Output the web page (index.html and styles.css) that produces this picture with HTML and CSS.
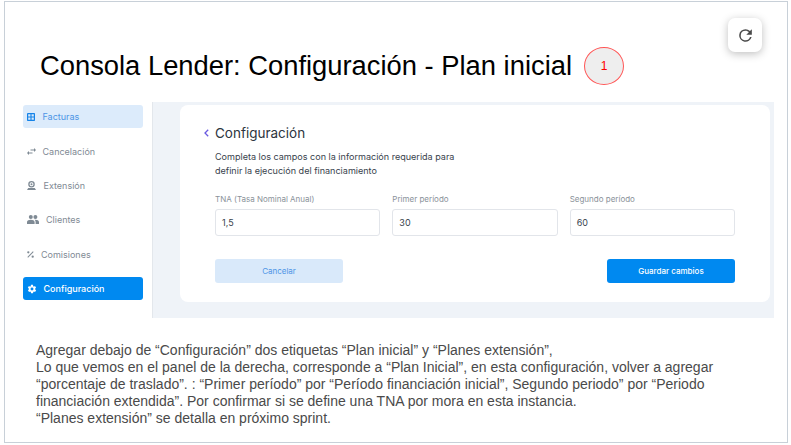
FILE: index.html
```html
<!DOCTYPE html>
<html lang="es">
<head>
    <meta charset="UTF-8">
    <meta name="viewport" content="width=device-width, initial-scale=1.0">
    <title>Consola Lender: Configuración - Plan inicial</title>
    <link rel="stylesheet" href="styles.css">
</head>
<body>
    <div class="slide">
        <button class="refresh" type="button" aria-label="Recargar">
            <svg width="19" height="19" viewBox="0 0 24 24"><path d="M17.65 6.35A7.96 7.96 0 0 0 12 4a8 8 0 1 0 7.73 10h-2.08A6 6 0 1 1 12 6c1.66 0 3.14.69 4.22 1.78L13 11h7V4l-2.35 2.35z"/></svg>
        </button>

        <header class="head">
            <h1>Consola Lender: Configuración - Plan inicial</h1>
            <span class="badge">1</span>
        </header>

        <div class="app">
            <nav class="side">
                <a class="item item-light">
                    <svg width="8" height="8" viewBox="0 0 10 10"><path d="M1.2 0h7.6C9.5 0 10 .5 10 1.2v7.6c0 .7-.5 1.2-1.2 1.2H1.2C.5 10 0 9.5 0 8.8V1.2C0 .5.5 0 1.2 0zm.3 1.5v2.8h2.8V1.500H1.500zm4.200 0v2.800h2.800V1.500H5.700zM1.500 5.700v2.800h2.800V5.700H1.500zm4.200 0v2.800h2.800V5.700H5.700z" fill-rule="evenodd"/></svg>
                    Facturas
                </a>
                <a class="item item-swap">
                    <svg width="9" height="9" viewBox="3 3 18 18"><path d="M6.99 11 3 15l3.99 4v-3H14v-2H6.99v-3zM21 9l-3.99-4v3H10v2h7.01v3L21 9z"/></svg>
                    Cancelación
                </a>
                <a class="item">
                    <svg width="9" height="9" viewBox="0 0 11 11"><path d="M5.500 0a4 4 0 1 1 0 8 4 4 0 0 1 0-8zm0 1.600a2.400 2.400 0 1 0 0 4.800 2.400 2.400 0 0 0 0-4.800z" fill-rule="evenodd"/><circle cx="5.500" cy="4" r="1.200"/><path d="M1.500 8.500h8L11 11H0z"/></svg>
                    Extensión
                </a>
                <a class="item item-clients">
                    <svg width="12" height="9" viewBox="0 0 12 9"><circle cx="3.800" cy="2" r="2"/><circle cx="8.400" cy="2" r="2"/><path d="M0 9V7c0-1.500 2-2.300 3.800-2.300S7.600 5.500 7.600 7v2H0zm8.600 0V7c0-.9-.4-1.700-1-2.200.3-.1.600-.1.900-.1 1.700 0 3.500.8 3.500 2.300v2H8.600z"/></svg>
                    Clientes
                </a>
                <a class="item item-narrow">
                    <svg width="7" height="7" viewBox="0 0 8 8"><path d="M6.800.4 7.600 1.200 1.200 7.600.4 6.800z"/><circle cx="1.500" cy="1.500" r="1.300"/><circle cx="6.500" cy="6.500" r="1.300"/></svg>
                    Comisiones
                </a>
                <a class="item item-active">
                    <svg width="10" height="10" viewBox="0 0 24 24"><path d="M19.400 13c.1-.3.100-.7.100-1s0-.7-.1-1l2.100-1.600c.2-.2.200-.4.100-.6l-2-3.500c-.1-.2-.4-.3-.6-.2l-2.500 1c-.5-.4-1.100-.7-1.700-1l-.4-2.600c0-.3-.2-.5-.5-.5h-4c-.3 0-.5.200-.5.400l-.4 2.700c-.6.200-1.100.6-1.700 1l-2.500-1c-.2-.1-.5 0-.6.200l-2 3.500c-.1.200-.1.400.1.600L4.600 11c0 .3-.1.700-.1 1s0 .7.100 1l-2.100 1.600c-.2.200-.2.400-.1.600l2 3.500c.1.200.4.300.6.200l2.500-1c.5.400 1.100.7 1.700 1l.4 2.600c0 .3.200.5.500.5h4c.3 0 .5-.2.500-.4l.4-2.700c.6-.2 1.200-.6 1.700-1l2.500 1c.2.100.5 0 .6-.2l2-3.500c.1-.2.100-.4-.1-.6L19.400 13zM12 15.500a3.500 3.500 0 1 1 0-7 3.500 3.500 0 0 1 0 7z"/></svg>
                    Configuración
                </a>
            </nav>

            <main class="panel">
                <section class="card">
                    <h2 class="card-title">
                        <svg width="5" height="8" viewBox="0 0 5 8"><path d="M4.200 .8 1 4l3.200 3.200" fill="none" stroke="#6a5ae0" stroke-width="1.300"/></svg>
                        Configuración
                    </h2>
                    <p class="intro">Completa los campos con la información requerida para<br>definir la ejecución del financiamiento</p>
                    <div class="fields">
                        <div class="field">
                            <label>TNA (Tasa Nominal Anual)</label>
                            <div class="box">1,5</div>
                        </div>
                        <div class="field">
                            <label>Primer período</label>
                            <div class="box">30</div>
                        </div>
                        <div class="field">
                            <label>Segundo período</label>
                            <div class="box">60</div>
                        </div>
                    </div>
                    <div class="actions">
                        <button class="btn btn-light" type="button">Cancelar</button>
                        <button class="btn btn-primary" type="button">Guardar cambios</button>
                    </div>
                </section>
            </main>
        </div>

        <p class="notes">Agregar debajo de “Configuración” dos etiquetas “Plan inicial” y “Planes extensión”,<br>Lo que vemos en el panel de la derecha, corresponde a “Plan Inicial”, en esta configuración, volver a agregar<br>“porcentaje de traslado”. : “Primer período” por “Período financiación inicial”, Segundo periodo” por “Periodo<br>financiación extendida”. Por confirmar si se define una TNA por mora en esta instancia.<br>“Planes extensión” se detalla en próximo sprint.</p>
    </div>
</body>
</html>
```

FILE: styles.css
```css
html, body { margin: 0; height: 100%; background: #fff; overflow: hidden; }
body { padding: 1px 3px 2px 4px; box-sizing: border-box; }

.slide {
    position: relative;
    height: 442px;
    box-sizing: border-box;
    border: 1px solid #c8d0d8;
    background: #fff;
    font-family: "Liberation Sans", Arial, sans-serif;
}

.refresh {
    position: absolute;
    top: 16px;
    left: 723px;
    width: 34px;
    height: 34px;
    padding: 0;
    border: none;
    border-radius: 7px;
    background: #fff;
    box-shadow: 0 2px 8px rgba(0, 0, 0, 0.25);
    display: flex;
    align-items: center;
    justify-content: center;
}
.refresh svg { fill: #4a4a4a; }

.head {
    display: flex;
    align-items: center;
    gap: 12px;
    height: 39px;
    padding: 44px 0 0 35px;
}
.head h1 { margin: 0; font-size: 27.35px; font-weight: 400; color: #000; white-space: nowrap; }
.badge {
    width: 38px;
    height: 36px;
    border: 1px solid #f55;
    border-radius: 50%;
    background: #eee;
    color: #f00;
    font-size: 12px;
    display: flex;
    align-items: center;
    justify-content: center;
}

.app {
    display: flex;
    gap: 9px;
    margin: 17px 0 0 18px;
    width: 751px;
    height: 216px;
    font-family: Inter, "Liberation Sans", sans-serif;
}

.side { width: 120px; padding-top: 3.3px; display: flex; flex-direction: column; gap: 11.4px; }
.item {
    height: 23px;
    box-sizing: border-box;
    padding-left: 4px;
    border-radius: 3px;
    display: flex;
    align-items: center;
    gap: 7.5px;
    font-size: 9px;
    color: #7f8a94;
}
.item svg { fill: #7f8a94; flex: none; }
.item-swap { gap: 6.5px; }
.item-clients { gap: 7px; }
.item-narrow { gap: 7px; }
.item-light { background: #dcebfb; color: #4d95e6; }
.item-light svg { fill: #1583e8; }
.item-active { background: #0089f0; color: #fff; font-weight: 500; gap: 6.5px; }
.item-active svg { fill: #fff; }

.panel {
    flex: 1;
    background: #eff3f8;
    border-left: 1px solid #e3e7ec;
    padding: 3px 4px 16px 27px;
}
.card {
    height: 197px;
    box-sizing: border-box;
    background: #fff;
    border-radius: 8px;
    padding: 18px 35px 0 35px;
}
.card-title {
    display: flex;
    align-items: center;
    gap: 6px;
    margin: 0 0 0 -11px;
    font-size: 13.5px;
    font-weight: 400;
    line-height: 20px;
    color: #2c3540;
}
.intro { margin: 7px 0 0; font-size: 9.05px; line-height: 13.5px; color: #38424c; }

.fields { display: flex; gap: 12px; margin-top: 16px; }
.field { flex: 1; }
.field label { display: block; font-size: 8px; line-height: 12px; color: #8a929a; }
.box {
    margin-top: 4px;
    height: 27px;
    box-sizing: border-box;
    border: 1px solid #e2e5ea;
    border-radius: 3px;
    padding-left: 6px;
    display: flex;
    align-items: center;
    font-size: 9px;
    color: #38424c;
}

.actions { display: flex; justify-content: space-between; margin-top: 23px; }
.btn { height: 24px; padding: 0; border: none; border-radius: 3px; font-family: inherit; font-size: 8px; }
.btn-light { width: 128px; background: #d9e9fa; color: #4d95e6; }
.btn-primary { width: 128px; background: #0089f0; color: #fff; font-weight: 500; }

.notes {
    margin: 24px 0 0 31px;
    font-size: 14px;
    line-height: 17px;
    color: #4a4a4a;
    white-space: nowrap;
}
```
